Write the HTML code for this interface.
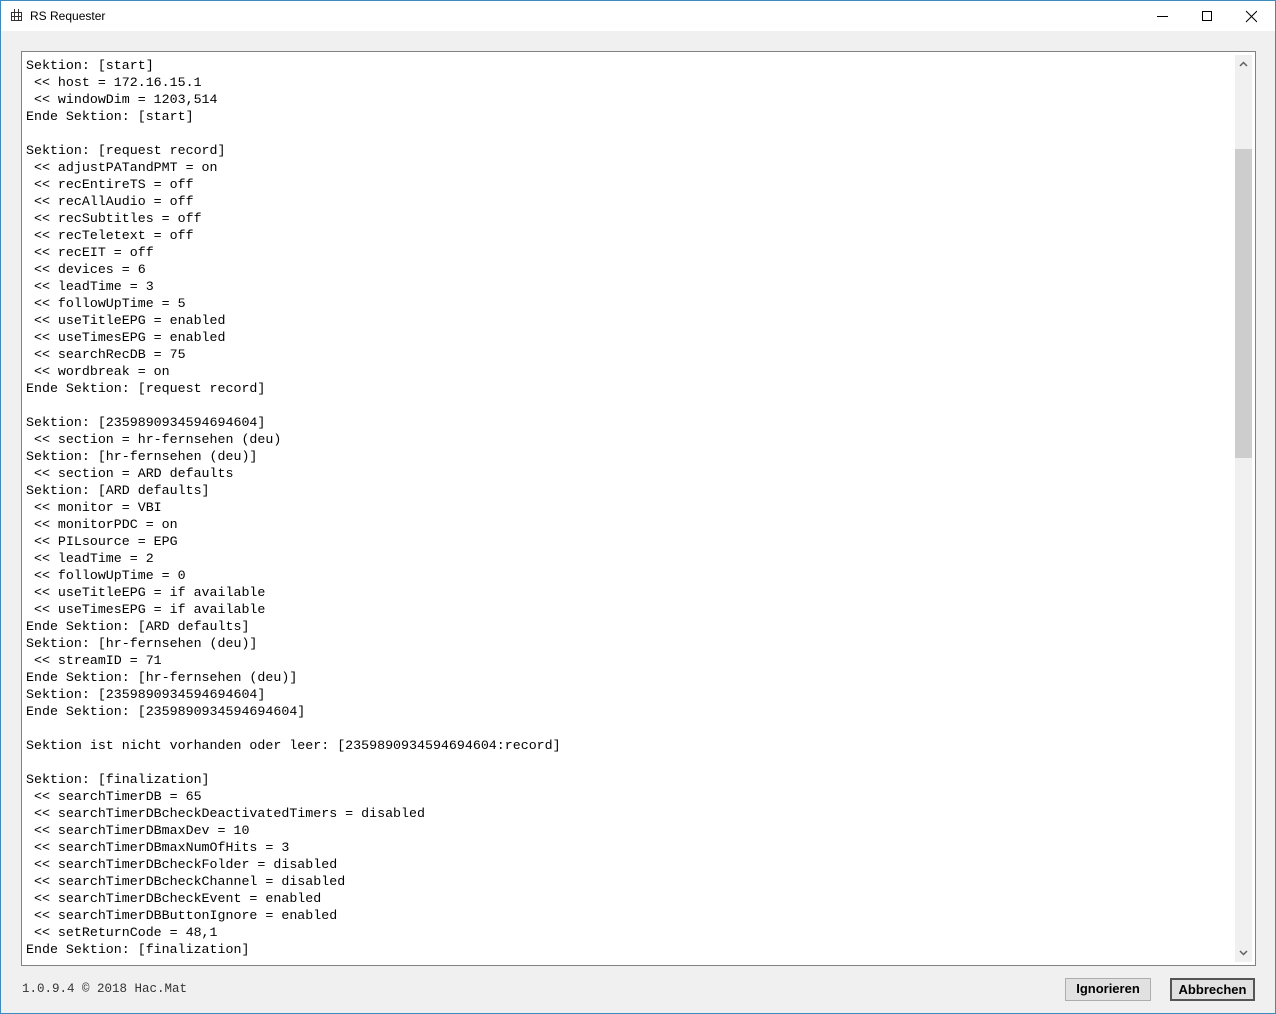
<!DOCTYPE html>
<html><head><meta charset="utf-8"><style>
*{margin:0;padding:0;box-sizing:border-box}
body{width:1276px;height:1014px;overflow:hidden;background:#f0f0f0;position:relative;font-family:"Liberation Sans",sans-serif}
.win{position:absolute;inset:0;border:1px solid #3c8bbf}
.title{position:absolute;left:1px;top:1px;right:1px;height:30px;background:#fff}
.title .t{position:absolute;left:29px;top:8px;font-size:12px;color:#000}
.box{position:absolute;left:21px;top:51px;width:1235px;height:915px;border:1px solid #828282;background:#fff}
pre{position:absolute;left:4px;top:5px;font-family:"Liberation Mono",monospace;font-size:13.3px;line-height:17px;color:#000}
.sb{position:absolute;right:3px;top:3px;width:17px;bottom:3px;background:#f0f0f0}
.thumb{position:absolute;left:0;width:17px;top:94px;height:309px;background:#cdcdcd}
.foot{position:absolute;left:22px;top:982px;font-family:"Liberation Mono",monospace;font-size:12.5px;color:#333}
.btn{position:absolute;top:978px;height:23px;background:#e1e1e1;border:1px solid #adadad;font-size:13px;font-weight:bold;text-align:center;line-height:20px;color:#000}
</style></head><body>
<div class="win"></div>
<div class="title">
<svg style="position:absolute;left:9px;top:7px" width="13" height="14" viewBox="0 0 13 14"><rect x="1.5" y="4.5" width="10" height="8" fill="none" stroke="#333"/><line x1="1.5" y1="8.5" x2="11.5" y2="8.5" stroke="#333"/><line x1="4.5" y1="1" x2="4.5" y2="13" stroke="#333"/><line x1="8.5" y1="1" x2="8.5" y2="13" stroke="#333"/></svg>
<div class="t">RS Requester</div>
<svg style="position:absolute;left:1156px;top:8px" width="100" height="16"><line x1="0" y1="7.5" x2="11" y2="7.5" stroke="#000"/><rect x="45.5" y="2.5" width="9" height="9" fill="none" stroke="#000"/><path d="M89 2L100 13M100 2L89 13" stroke="#000"/></svg>
</div>
<div class="box">
<pre>Sektion: [start]
 &lt;&lt; host = 172.16.15.1
 &lt;&lt; windowDim = 1203,514
Ende Sektion: [start]

Sektion: [request record]
 &lt;&lt; adjustPATandPMT = on
 &lt;&lt; recEntireTS = off
 &lt;&lt; recAllAudio = off
 &lt;&lt; recSubtitles = off
 &lt;&lt; recTeletext = off
 &lt;&lt; recEIT = off
 &lt;&lt; devices = 6
 &lt;&lt; leadTime = 3
 &lt;&lt; followUpTime = 5
 &lt;&lt; useTitleEPG = enabled
 &lt;&lt; useTimesEPG = enabled
 &lt;&lt; searchRecDB = 75
 &lt;&lt; wordbreak = on
Ende Sektion: [request record]

Sektion: [2359890934594694604]
 &lt;&lt; section = hr-fernsehen (deu)
Sektion: [hr-fernsehen (deu)]
 &lt;&lt; section = ARD defaults
Sektion: [ARD defaults]
 &lt;&lt; monitor = VBI
 &lt;&lt; monitorPDC = on
 &lt;&lt; PILsource = EPG
 &lt;&lt; leadTime = 2
 &lt;&lt; followUpTime = 0
 &lt;&lt; useTitleEPG = if available
 &lt;&lt; useTimesEPG = if available
Ende Sektion: [ARD defaults]
Sektion: [hr-fernsehen (deu)]
 &lt;&lt; streamID = 71
Ende Sektion: [hr-fernsehen (deu)]
Sektion: [2359890934594694604]
Ende Sektion: [2359890934594694604]

Sektion ist nicht vorhanden oder leer: [2359890934594694604:record]

Sektion: [finalization]
 &lt;&lt; searchTimerDB = 65
 &lt;&lt; searchTimerDBcheckDeactivatedTimers = disabled
 &lt;&lt; searchTimerDBmaxDev = 10
 &lt;&lt; searchTimerDBmaxNumOfHits = 3
 &lt;&lt; searchTimerDBcheckFolder = disabled
 &lt;&lt; searchTimerDBcheckChannel = disabled
 &lt;&lt; searchTimerDBcheckEvent = enabled
 &lt;&lt; searchTimerDBButtonIgnore = enabled
 &lt;&lt; setReturnCode = 48,1
Ende Sektion: [finalization]</pre>
<div class="sb"><div class="thumb"></div>
<svg style="position:absolute;left:4px;top:6px" width="9" height="6"><path d="M1 5L4.5 1.5L8 5" stroke="#606060" stroke-width="1.5" fill="none"/></svg>
<svg style="position:absolute;left:4px;bottom:6px" width="9" height="6"><path d="M1 1L4.5 4.5L8 1" stroke="#606060" stroke-width="1.5" fill="none"/></svg>
</div>
</div>
<div class="foot">1.0.9.4 © 2018 Hac.Mat</div>
<div class="btn" style="left:1065px;width:86px">Ignorieren</div>
<div class="btn" style="left:1170px;width:85px;border:2px solid #555;line-height:19px">Abbrechen</div>
</body></html>
